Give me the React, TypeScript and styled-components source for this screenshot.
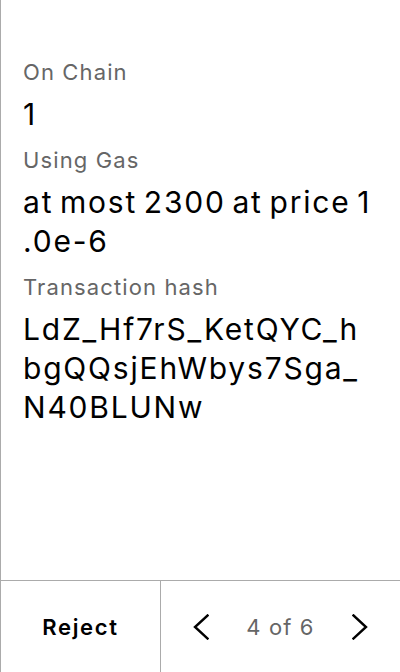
import React from "react";
import styled, { createGlobalStyle } from "styled-components";

const Global = createGlobalStyle`
  html, body { margin: 0; padding: 0; background: #fff; }
  body {
    font-family: Inter, "Noto Sans", sans-serif;
    letter-spacing: 0.07em;
  }
  * { box-sizing: border-box; }
`;

const Screen = styled.div`
  width: 400px;
  height: 672px;
  display: flex;
  flex-direction: column;
  border-left: 1px solid #ababab;
  background: #fff;
  color: #000;
`;

const Content = styled.div`
  flex: 1;
  padding: 58px 24px 0 22px;
  display: flex;
  flex-direction: column;
`;

const Label = styled.div`
  font-size: 22px;
  line-height: 28px;
  color: #666;
  margin-bottom: 9px;
`;

const Value = styled.div`
  font-size: 30px;
  line-height: 39px;
  letter-spacing: 0.06em;
  word-spacing: -3.5px;
  color: #000;
  word-break: break-all;
  line-break: anywhere;
  margin-bottom: 12px;
`;

const Footer = styled.div`
  height: 92px;
  border-top: 1px solid #ababab;
  display: flex;
`;

const RejectButton = styled.button`
  width: 160px;
  flex: none;
  border: none;
  border-right: 1px solid #ababab;
  background: transparent;
  font-family: inherit;
  letter-spacing: 0.075em;
  font-size: 22px;
  font-weight: 600;
  color: #000;
  padding: 0;
  cursor: pointer;
`;

const Pager = styled.div`
  flex: 1;
  display: flex;
  align-items: center;
  justify-content: space-between;
  padding: 0 32px;
`;

const ArrowButton = styled.button`
  border: none;
  background: transparent;
  padding: 0;
  display: flex;
  align-items: center;
  cursor: pointer;
`;

const PageText = styled.span`
  font-size: 22px;
  color: #666;
`;

const Chevron = ({ dir }: { dir: "left" | "right" }) => (
  <svg width="16" height="26" viewBox="0 0 16 26" fill="none">
    <polyline
      points={dir === "left" ? "14.5,1.5 2,13 14.5,24.5" : "1.5,1.5 14,13 1.5,24.5"}
      stroke="#000"
      strokeWidth="2.4"
      strokeLinecap="square"
      strokeLinejoin="miter"
    />
  </svg>
);

export default function App() {
  return (
    <>
      <Global />
      <Screen>
        <Content>
          <Label>On Chain</Label>
          <Value>1</Value>
          <Label>Using Gas</Label>
          <Value>at most 2300 at price 1.0e-6</Value>
          <Label>Transaction hash</Label>
          <Value>LdZ_Hf7rS_KetQYC_hbgQQsjEhWbys7Sga_N40BLUNw</Value>
        </Content>
        <Footer>
          <RejectButton>Reject</RejectButton>
          <Pager>
            <ArrowButton aria-label="Previous">
              <Chevron dir="left" />
            </ArrowButton>
            <PageText>4 of 6</PageText>
            <ArrowButton aria-label="Next">
              <Chevron dir="right" />
            </ArrowButton>
          </Pager>
        </Footer>
      </Screen>
    </>
  );
}
